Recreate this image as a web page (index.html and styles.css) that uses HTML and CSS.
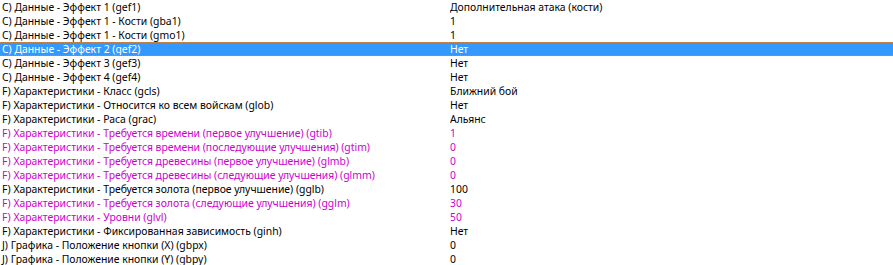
FILE: index.html
```html
<!DOCTYPE html>
<html>
<head>
<meta charset="utf-8">
<link rel="stylesheet" href="styles.css">
</head>
<body>
<div class="list">
  <div class="row"><span class="k">C) Данные - Эффект 1 (gef1)</span><span class="v">Дополнительная атака (кости)</span></div>
  <div class="row"><span class="k">C) Данные - Эффект 1 - Кости (gba1)</span><span class="v">1</span></div>
  <div class="row"><span class="k">C) Данные - Эффект 1 - Кости (gmo1)</span><span class="v">1</span></div>
  <div class="row sel"><span class="k">C) Данные - Эффект 2 (gef2)</span><span class="v">Нет</span></div>
  <div class="row"><span class="k">C) Данные - Эффект 3 (gef3)</span><span class="v">Нет</span></div>
  <div class="row"><span class="k">C) Данные - Эффект 4 (gef4)</span><span class="v">Нет</span></div>
  <div class="row"><span class="k">F) Характеристики - Класс (gcls)</span><span class="v">Ближний бой</span></div>
  <div class="row"><span class="k">F) Характеристики - Относится ко всем войскам (glob)</span><span class="v">Нет</span></div>
  <div class="row"><span class="k">F) Характеристики - Раса (grac)</span><span class="v">Альянс</span></div>
  <div class="row mod"><span class="k">F) Характеристики - Требуется времени (первое улучшение) (gtib)</span><span class="v">1</span></div>
  <div class="row mod"><span class="k">F) Характеристики - Требуется времени (последующие улучшения) (gtim)</span><span class="v">0</span></div>
  <div class="row mod"><span class="k">F) Характеристики - Требуется древесины (первое улучшение) (glmb)</span><span class="v">0</span></div>
  <div class="row mod"><span class="k">F) Характеристики - Требуется древесины (следующие улучшения) (glmm)</span><span class="v">0</span></div>
  <div class="row"><span class="k">F) Характеристики - Требуется золота (первое улучшение) (gglb)</span><span class="v">100</span></div>
  <div class="row mod"><span class="k">F) Характеристики - Требуется золота (следующие улучшения) (gglm)</span><span class="v">30</span></div>
  <div class="row mod"><span class="k">F) Характеристики - Уровни (glvl)</span><span class="v">50</span></div>
  <div class="row"><span class="k">F) Характеристики - Фиксированная зависимость (ginh)</span><span class="v">Нет</span></div>
  <div class="row"><span class="k">J) Графика - Положение кнопки (X) (gbpx)</span><span class="v">0</span></div>
  <div class="row"><span class="k">J) Графика - Положение кнопки (Y) (gbpy)</span><span class="v">0</span></div>
</div>
</body>
</html>
```
FILE: styles.css
```css
html, body {
  margin: 0;
  padding: 0;
  background: #ffffff;
  overflow: hidden;
}
.list {
  width: 893px;
  font-family: "Noto Sans", "Liberation Sans", Arial, sans-serif;
  font-size: 10.4px;
  color: #000000;
}
.row {
  display: grid;
  grid-template-columns: 450px 1fr;
  height: 14px;
  line-height: 14px;
  box-sizing: border-box;
  white-space: nowrap;
}
.k {
  padding-left: 2px;
  overflow: hidden;
}
.v {
  overflow: hidden;
}
.mod {
  color: #cc00cc;
}
.sel {
  background: #3399ff;
  color: #ffffff;
  border-top: 1px dotted #c8864a;
  border-bottom: 1px dotted #c8864a;
  line-height: 12px;
}
```
